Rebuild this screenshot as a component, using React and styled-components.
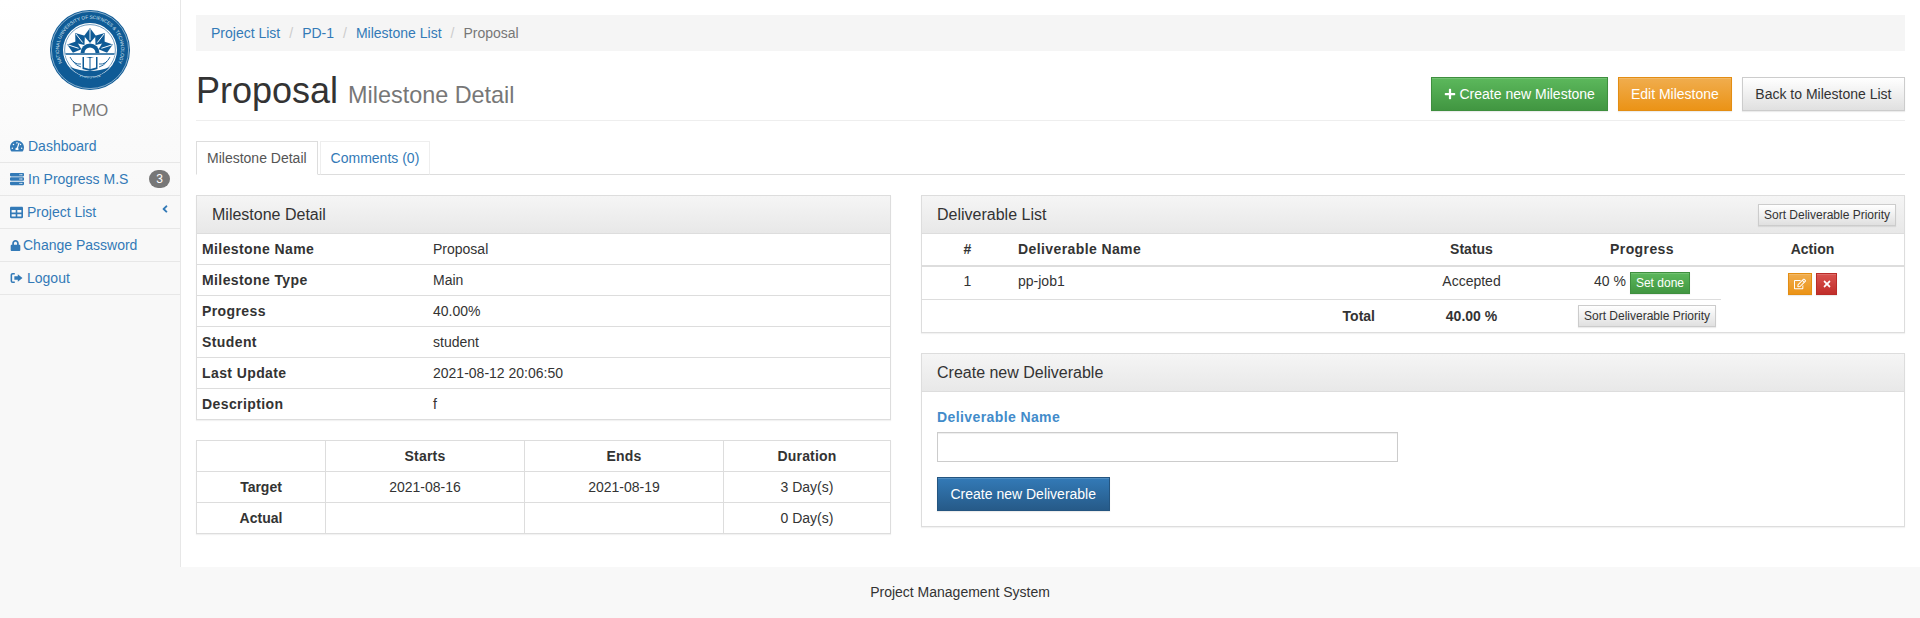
import React from 'react';
import styled, { createGlobalStyle } from 'styled-components';
import { FaTachometerAlt, FaServer, FaTable, FaLock, FaAngleLeft, FaPlus, FaRegEdit, FaTimes } from 'react-icons/fa';

const GlobalStyle = createGlobalStyle`
  html, body { margin: 0; padding: 0; background: #fff; }
  body {
    font-family: "Liberation Sans", Arial, sans-serif;
    font-size: 14px;
    line-height: 20px;
    color: #333;
  }
  * { box-sizing: border-box; }
`;

const Page = styled.div`
  width: 1920px;
  height: 618px;
  overflow: hidden;
  display: flex;
  flex-direction: column;
`;

const Body = styled.div`
  display: flex;
  height: 567px;
`;

const Sidebar = styled.aside`
  width: 181px;
  flex: none;
  border-right: 1px solid #e7e7e7;
  background: linear-gradient(#fff, #f8f8f8 200px);
`;

const Brand = styled.div`
  display: flex;
  flex-direction: column;
  align-items: center;
  padding-top: 10px;
  height: 129px;
`;

const BrandName = styled.div`
  margin-top: 11px;
  font-size: 16px;
  line-height: 20px;
  color: #777;
`;

const NavItem = styled.a`
  height: 33px;
  display: flex;
  align-items: center;
  gap: ${({ $gap }) => $gap || 4}px;
  padding: 0 10px;
  border-bottom: 1px solid #e7e7e7;
  color: #337ab7;
  &:first-of-type { height: 34px; }
  svg { flex: none; }
`;

const NavBadge = styled.span`
  margin-left: auto;
  width: 21px;
  height: 18px;
  border-radius: 10px;
  background: #777;
  color: #fff;
  font-size: 12px;
  line-height: 18px;
  text-align: center;
`;

const NavArrow = styled.span`
  margin-left: auto;
  display: flex;
  margin-top: -6px;
  margin-right: -1px;
`;

const Content = styled.main`
  flex: 1;
  min-width: 0;
  padding: 15px 15px 0;
`;

const Breadcrumb = styled.nav`
  height: 36px;
  padding: 8px 15px;
  background: #f5f5f5;
  display: flex;
  color: #777;
`;

const Crumb = styled.a`
  color: #337ab7;
`;

const CrumbSep = styled.span`
  padding: 0 9px 0 9px;
  color: #ccc;
`;

const PageHeader = styled.header`
  height: 70px;
  border-bottom: 1px solid #eee;
  display: flex;
  align-items: flex-start;
  justify-content: space-between;
`;

const Title = styled.h1`
  margin: 0;
  padding-top: 20px;
  font-size: 36px;
  line-height: 40px;
  font-weight: 400;
  color: #333;
`;

const SubTitle = styled.small`
  font-size: 23.4px;
  color: #777;
`;

const HeaderActions = styled.div`
  display: flex;
  gap: 10px;
  padding-top: 26px;
`;

const tones = {
  green: { bg: 'linear-gradient(#5cb85c, #419641)', border: '#3e8f3e', color: '#fff' },
  orange: { bg: 'linear-gradient(#f0ad4e, #eb9316)', border: '#e38d13', color: '#fff' },
  blue: { bg: 'linear-gradient(#337ab7, #265a88)', border: '#245580', color: '#fff' },
  red: { bg: 'linear-gradient(#d9534f, #c12e2a)', border: '#b92c28', color: '#fff' },
  plain: { bg: 'linear-gradient(#fff, #e0e0e0)', border: '#ccc', color: '#333' },
};

const Button = styled.button`
  display: inline-flex;
  align-items: center;
  justify-content: center;
  gap: 3px;
  height: ${({ $small }) => ($small ? 22 : 34)}px;
  padding: ${({ $small }) => ($small ? '0 5px' : '0 12px')};
  font-family: inherit;
  font-size: ${({ $small }) => ($small ? 12 : 14)}px;
  color: ${({ $tone }) => tones[$tone].color};
  background: ${({ $tone }) => tones[$tone].bg};
  border: 1px solid ${({ $tone }) => tones[$tone].border};
  border-radius: 0;
  box-shadow: inset 0 1px 0 rgba(255, 255, 255, 0.15), 0 1px 1px rgba(0, 0, 0, 0.075);
  white-space: nowrap;
`;

const WideButton = styled(Button)`
  padding: 0 12.5px;
`;

const IconButton = styled(Button)`
  width: ${({ $w }) => $w}px;
  padding: 0;
`;

const Tabs = styled.div`
  display: flex;
  gap: 2px;
  margin-top: 20px;
  height: 34px;
  border-bottom: 1px solid #ddd;
`;

const Tab = styled.a`
  height: 34px;
  padding: 6px 10px 0;
  border: 1px solid ${({ $active }) => ($active ? '#ddd' : '#eee')};
  border-bottom-color: ${({ $active }) => ($active ? '#fff' : '#ddd')};
  color: ${({ $active }) => ($active ? '#555' : '#337ab7')};
  background: #fff;
`;

const Columns = styled.div`
  display: grid;
  grid-template-columns: 695px 984px;
  column-gap: 30px;
  margin-top: 20px;
`;

const Panel = styled.section`
  border: 1px solid #ddd;
  margin-bottom: 20px;
  box-shadow: 0 1px 1px rgba(0, 0, 0, 0.05);
`;

const PanelHeading = styled.div`
  height: 38px;
  padding: 0 15px;
  display: flex;
  align-items: center;
  justify-content: space-between;
  font-size: 16px;
  color: #333;
  background: linear-gradient(#f5f5f5, #e8e8e8);
  border-bottom: 1px solid #ddd;
`;

const PanelSortButton = styled(Button)`
  margin-right: -7px;
`;

const PanelBody = styled.div`
  padding: 15px;
  height: 134px;
`;

const Table = styled.table`
  width: 100%;
  border-collapse: collapse;
  table-layout: fixed;
`;

const Col = styled.col`
  width: ${({ $w }) => $w}px;
`;

const Cell = styled.td`
  height: ${({ $h }) => $h || 31}px;
  padding: 0 5px;
  border-top: 1px solid #ddd;
  text-align: ${({ $align }) => $align || 'left'};
  font-weight: ${({ $bold }) => ($bold ? 700 : 400)};
  letter-spacing: ${({ $spread }) => ($spread ? '0.4px' : 'normal')};
  vertical-align: middle;
`;

const FirstRowCell = styled(Cell)`
  border-top: 0;
  height: ${({ $h }) => $h || 30}px;
`;

// the deliverable row text sits a bit above the centre of its button
const DeliverableCell = styled(FirstRowCell)`
  height: 33px;
  padding-bottom: 3px;
`;

const ProgressCell = styled(FirstRowCell)`
  height: 33px;
`;

const HeadCell = styled.th`
  height: 32px;
  padding: 0 5px 2px;
  border-bottom: 2px solid #ddd;
  font-weight: 700;
  letter-spacing: ${({ $spread }) => ($spread ? '0.4px' : 'normal')};
  text-align: ${({ $align }) => $align || 'center'};
`;

const ActionCell = styled.td`
  padding: 6px 0 0;
  vertical-align: top;
  text-align: center;
`;

const ActionGroup = styled.div`
  display: flex;
  justify-content: center;
  gap: 4px;
`;

const ProgressValue = styled.div`
  display: flex;
  align-items: center;
  justify-content: center;
  gap: 4px;
`;

const ProgressText = styled.span`
  margin-bottom: 3px;
`;

const TimingTable = styled(Table)`
  width: 694px;
  border: 1px solid #ddd;
  box-shadow: 0 1px 1px rgba(0, 0, 0, 0.05);
`;

const TimingHead = styled.th`
  height: 31px;
  padding: 0 5px;
  font-weight: 700;
  letter-spacing: 0.2px;
  text-align: center;
  border: 1px solid #ddd;
`;

const TimingCell = styled.td`
  height: 31px;
  padding: 0 5px;
  text-align: center;
  font-weight: ${({ $bold }) => ($bold ? 700 : 400)};
  border: 1px solid #ddd;
`;

const FieldLabel = styled.label`
  display: block;
  font-weight: 700;
  letter-spacing: 0.4px;
  color: #428bca;
`;

const TextInput = styled.input`
  display: block;
  width: 461px;
  height: 30px;
  margin: 5px 0 15px;
  border: 1px solid #ccc;
  background: #fff;
  box-shadow: inset 0 1px 1px rgba(0, 0, 0, 0.075);
  outline: none;
`;

const Footer = styled.footer`
  height: 51px;
  flex: none;
  background: #f8f8f8;
  text-align: center;
  line-height: 51px;
  color: #333;
`;

const LOGO_BLUE = '#0f5b96';
const rayAngles = [-90, -52, -128, -18, -162];

const Logo = () => (
  <svg width="80" height="80" viewBox="0 0 80 80">
    <defs>
      <path id="ringTop" d="M 13 55 A 31 31 0 1 1 67 55" />
      <path id="ringBottom" d="M 19 61 A 34 34 0 0 0 61 61" />
    </defs>
    <circle cx="40" cy="40" r="40" fill={LOGO_BLUE} />
    <circle cx="40" cy="40" r="38.6" fill="none" stroke="#fff" strokeWidth="0.5" />
    <text fontFamily="Liberation Sans, sans-serif" fontSize="4.7" fill="#dfeaf3">
      <textPath href="#ringTop" startOffset="50%" textAnchor="middle">
        NATIONAL UNIVERSITY OF SCIENCES &amp; TECHNOLOGY
      </textPath>
    </text>
    <text fontFamily="Liberation Sans, sans-serif" fontSize="4.4" fill="#dfeaf3">
      <textPath href="#ringBottom" startOffset="50%" textAnchor="middle">
        PAKISTAN
      </textPath>
    </text>
    <circle cx="40" cy="40" r="27" fill="#fff" />
    <circle cx="40" cy="40" r="25.4" fill="none" stroke={LOGO_BLUE} strokeWidth="0.6" />
    {rayAngles.map((angle) => (
      <g key={angle} transform={`translate(40 42) rotate(${angle})`}>
        <polygon points="9,0 16,-6 24,0 16,6" fill={LOGO_BLUE} />
        <path d="M12 0 H23" stroke="#fff" strokeWidth="0.9" />
      </g>
    ))}
    <path d="M30.5 43 a9.5 9.5 0 0 1 19 0 z" fill={LOGO_BLUE} />
    <path d="M34.5 43 a5.5 5.5 0 0 1 11 0 z" fill="#fff" />
    <path d="M15 44 H65 A26 26 0 0 1 15 44 Z" fill="#fff" />
    <path d="M15.5 44 H64.5" stroke={LOGO_BLUE} strokeWidth="1.3" />
    <path d="M20 57 A25.5 25.5 0 0 0 60 57 Q40 65 20 57 Z" fill={LOGO_BLUE} />
    <path d="M32.5 47 H47.5 V59 L40 61 L32.5 59 Z" fill={LOGO_BLUE} />
    <path d="M34 46.5 L39.5 48 V59 L34 57.5 Z M46 46.5 L40.5 48 V59 L46 57.5 Z" fill="#fff" />
    <path d="M20 47 q4 8 11 7 M60 47 q-4 8 -11 7 M23 51 q3 5 8 6 M57 51 q-3 5 -8 6" fill="none" stroke={LOGO_BLUE} strokeWidth="0.9" />
  </svg>
);

const SignOutIcon = () => (
  <svg width="13" height="12" viewBox="0 0 15 14">
    <path d="M5.5 2 H3 a1.5 1.5 0 0 0 -1.5 1.5 v7 A1.5 1.5 0 0 0 3 12 h2.5" fill="none" stroke="currentColor" strokeWidth="1.8" />
    <path d="M9 2.5 L14.5 7 L9 11.5 V9 H5 V5 H9 Z" fill="currentColor" />
  </svg>
);

const navItems = [
  { label: 'Dashboard', icon: <FaTachometerAlt size={14} /> },
  { label: 'In Progress M.S', icon: <FaServer size={14} />, badge: 3 },
  { label: 'Project List', icon: <FaTable size={13} />, arrow: true },
  { label: 'Change Password', icon: <FaLock size={11} />, gap: 2 },
  { label: 'Logout', icon: <SignOutIcon /> },
];

const milestoneRows = [
  ['Milestone Name', 'Proposal'],
  ['Milestone Type', 'Main'],
  ['Progress', '40.00%'],
  ['Student', 'student'],
  ['Last Update', '2021-08-12 20:06:50'],
  ['Description', 'f'],
];

const crumbs = ['Project List', 'PD-1', 'Milestone List'];

const App = () => (
  <Page>
    <GlobalStyle />
    <Body>
      <Sidebar>
        <Brand>
          <Logo />
          <BrandName>PMO</BrandName>
        </Brand>
        {navItems.map((item) => (
          <NavItem key={item.label} $gap={item.gap}>
            {item.icon}
            {item.label}
            {item.badge && <NavBadge>{item.badge}</NavBadge>}
            {item.arrow && (
              <NavArrow>
                <FaAngleLeft size={12} />
              </NavArrow>
            )}
          </NavItem>
        ))}
      </Sidebar>

      <Content>
        <Breadcrumb>
          {crumbs.map((crumb) => (
            <React.Fragment key={crumb}>
              <Crumb>{crumb}</Crumb>
              <CrumbSep>/</CrumbSep>
            </React.Fragment>
          ))}
          Proposal
        </Breadcrumb>

        <PageHeader>
          <Title>
            Proposal <SubTitle>Milestone Detail</SubTitle>
          </Title>
          <HeaderActions>
            <Button $tone="green">
              <FaPlus size={12} />
              Create new Milestone
            </Button>
            <Button $tone="orange">Edit Milestone</Button>
            <WideButton $tone="plain">Back to Milestone List</WideButton>
          </HeaderActions>
        </PageHeader>

        <Tabs>
          <Tab $active>Milestone Detail</Tab>
          <Tab>Comments (0)</Tab>
        </Tabs>

        <Columns>
          <div>
            <Panel>
              <PanelHeading>Milestone Detail</PanelHeading>
              <Table>
                <colgroup>
                  <Col $w={231} />
                  <Col $w={462} />
                </colgroup>
                <tbody>
                  {milestoneRows.map(([label, value], i) => {
                    const RowCell = i === 0 ? FirstRowCell : Cell;
                    return (
                      <tr key={label}>
                        <RowCell $bold $spread>{label}</RowCell>
                        <RowCell>{value}</RowCell>
                      </tr>
                    );
                  })}
                </tbody>
              </Table>
            </Panel>

            <TimingTable>
              <colgroup>
                <Col $w={129} />
                <Col $w={199} />
                <Col $w={199} />
                <Col $w={167} />
              </colgroup>
              <thead>
                <tr>
                  <TimingHead />
                  <TimingHead>Starts</TimingHead>
                  <TimingHead>Ends</TimingHead>
                  <TimingHead>Duration</TimingHead>
                </tr>
              </thead>
              <tbody>
                <tr>
                  <TimingCell $bold>Target</TimingCell>
                  <TimingCell>2021-08-16</TimingCell>
                  <TimingCell>2021-08-19</TimingCell>
                  <TimingCell>3 Day(s)</TimingCell>
                </tr>
                <tr>
                  <TimingCell $bold>Actual</TimingCell>
                  <TimingCell />
                  <TimingCell />
                  <TimingCell>0 Day(s)</TimingCell>
                </tr>
              </tbody>
            </TimingTable>
          </div>

          <div>
            <Panel>
              <PanelHeading>
                Deliverable List
                <PanelSortButton $small $tone="plain">Sort Deliverable Priority</PanelSortButton>
              </PanelHeading>
              <Table>
                <colgroup>
                  <Col $w={91} />
                  <Col $w={367} />
                  <Col $w={183} />
                  <Col $w={158} />
                  <Col $w={183} />
                </colgroup>
                <thead>
                  <tr>
                    <HeadCell>#</HeadCell>
                    <HeadCell $align="left" $spread>Deliverable Name</HeadCell>
                    <HeadCell>Status</HeadCell>
                    <HeadCell $spread>Progress</HeadCell>
                    <HeadCell>Action</HeadCell>
                  </tr>
                </thead>
                <tbody>
                  <tr>
                    <DeliverableCell $align="center">1</DeliverableCell>
                    <DeliverableCell>pp-job1</DeliverableCell>
                    <DeliverableCell $align="center">Accepted</DeliverableCell>
                    <ProgressCell>
                      <ProgressValue>
                        <ProgressText>40 %</ProgressText>
                        <Button $small $tone="green">Set done</Button>
                      </ProgressValue>
                    </ProgressCell>
                    <ActionCell rowSpan={2}>
                      <ActionGroup>
                        <IconButton $small $w={24} $tone="orange"><FaRegEdit size={12} /></IconButton>
                        <IconButton $small $w={21} $tone="red"><FaTimes size={10} /></IconButton>
                      </ActionGroup>
                    </ActionCell>
                  </tr>
                  <tr>
                    <Cell $h={33} colSpan={2} $bold $align="right">Total</Cell>
                    <Cell $h={33} $bold $align="center">40.00 %</Cell>
                    <Cell $h={33} $align="right">
                      <Button $small $tone="plain">Sort Deliverable Priority</Button>
                    </Cell>
                  </tr>
                </tbody>
              </Table>
            </Panel>

            <Panel>
              <PanelHeading>Create new Deliverable</PanelHeading>
              <PanelBody>
                <FieldLabel>Deliverable Name</FieldLabel>
                <TextInput type="text" />
                <WideButton $tone="blue">Create new Deliverable</WideButton>
              </PanelBody>
            </Panel>
          </div>
        </Columns>
      </Content>
    </Body>
    <Footer>Project Management System</Footer>
  </Page>
);

export default App;
